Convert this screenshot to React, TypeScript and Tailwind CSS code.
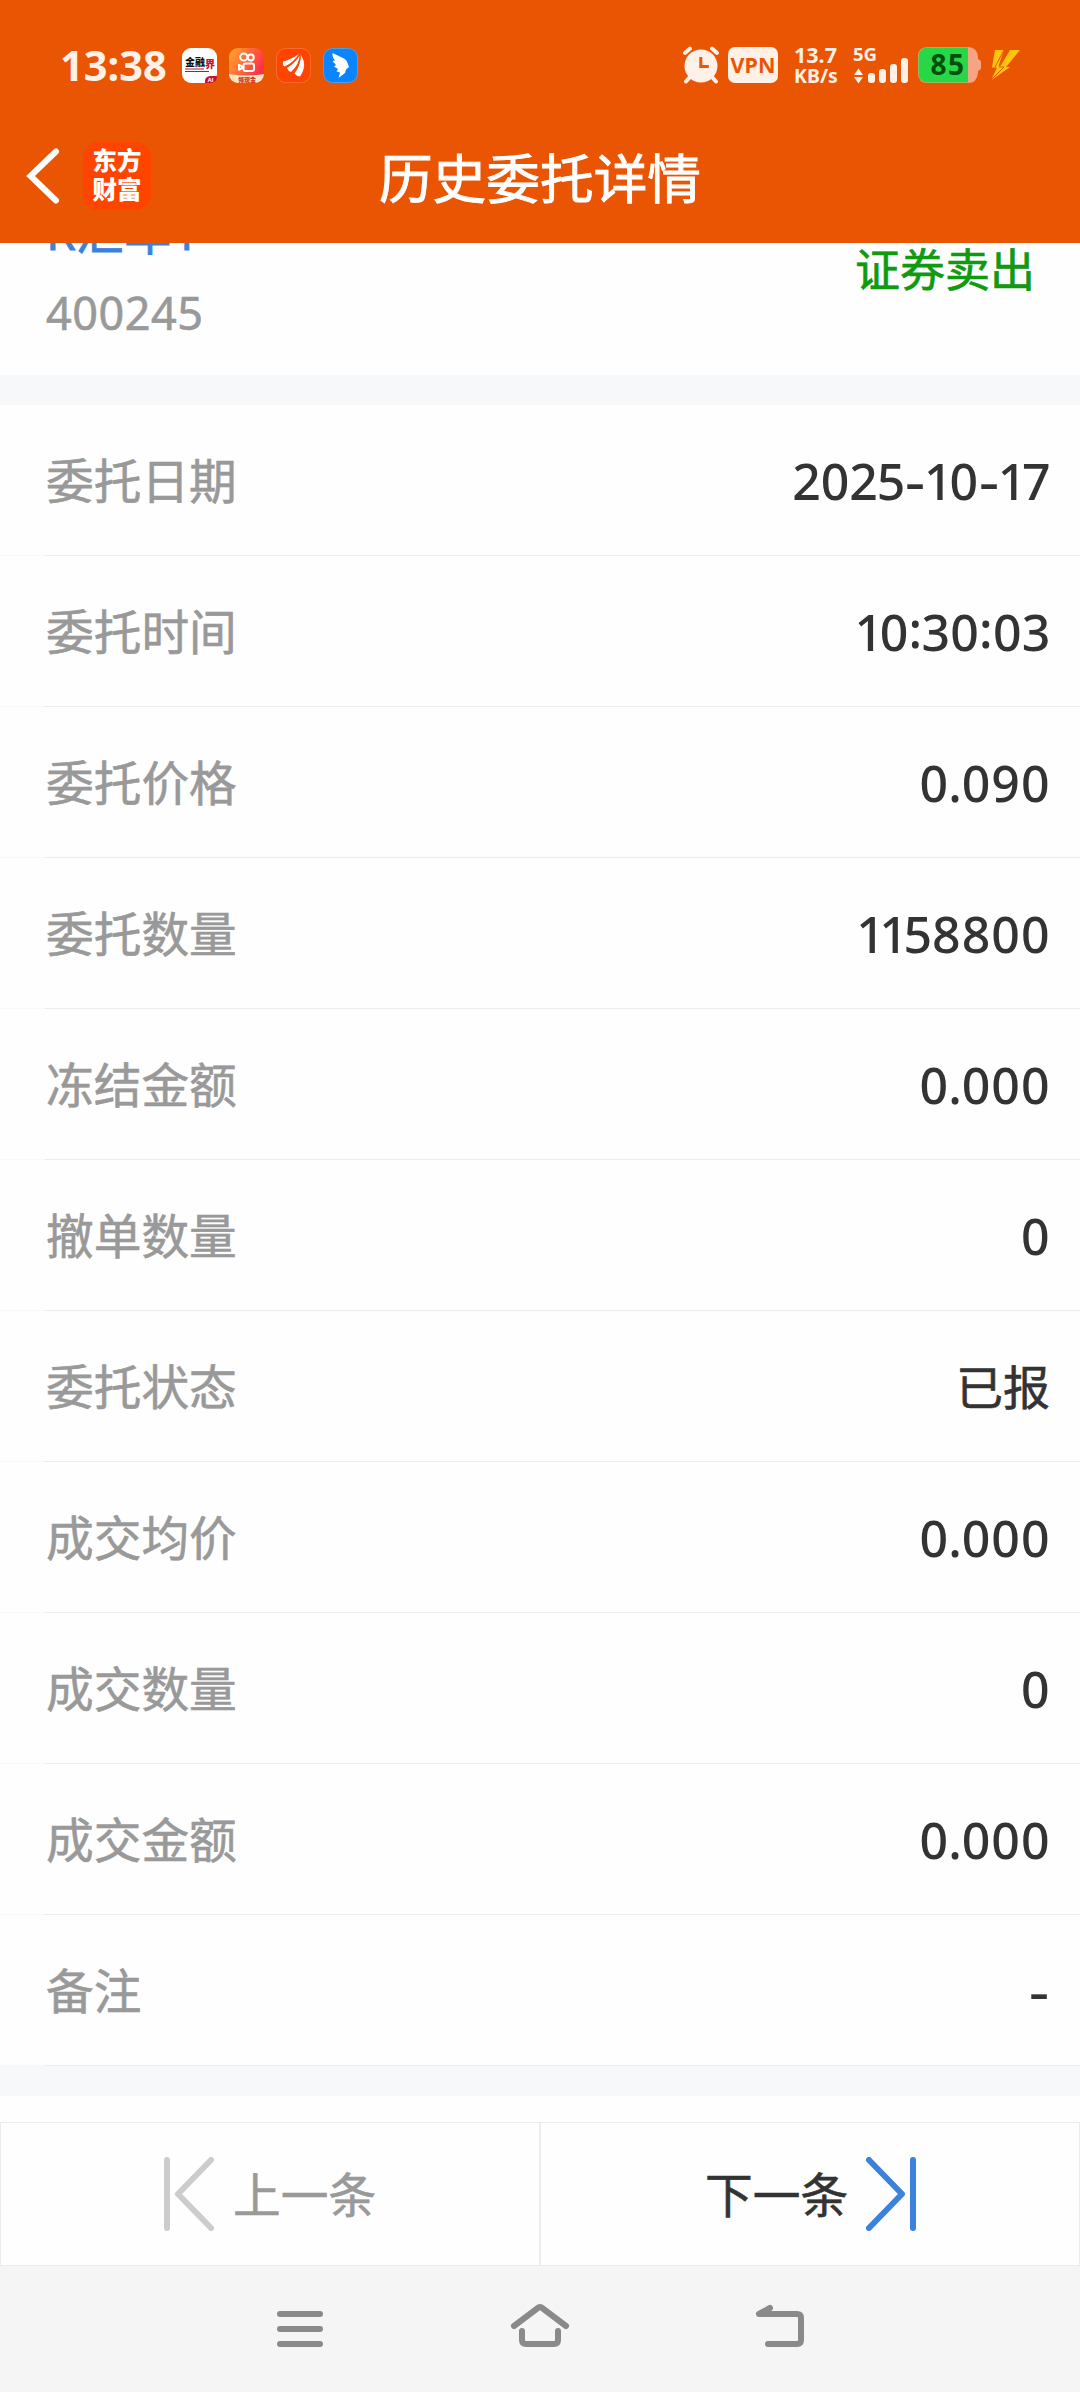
import React from "react";

const rows: [string, string][] = [
  ["委托日期", "2025-10-17"],
  ["委托时间", "10:30:03"],
  ["委托价格", "0.090"],
  ["委托数量", "1158800"],
  ["冻结金额", "0.000"],
  ["撤单数量", "0"],
  ["委托状态", "已报"],
  ["成交均价", "0.000"],
  ["成交数量", "0"],
  ["成交金额", "0.000"],
  ["备注", "-"],
];

const charClass: Record<string, string> = {
  "1": "w-[23px]",
  "2": "w-[27.5px]",
  "3": "w-[28px]",
  "5": "w-[27.5px]",
  "7": "w-[27.5px]",
  ".": "w-[12.5px]",
  ":": "w-[13px]",
  "-": "w-[21px]",
};

function Value({ text }: { text: string }) {
  if (/[^\d.:-]/.test(text)) return <span className="-mt-[3px] block text-[47px] leading-[60px] [-webkit-text-stroke:0.6px]">{text}</span>;
  return (
    <span className="mt-[2px] flex font-['Noto_Sans'] text-[50px] leading-[60px] font-medium">
      {text.split("").map((c, i) => (
        <span key={i} className={`flex justify-center ${charClass[c] ?? "w-[29.6px]"}`}>
          {c === "1" ? <span className="ml-[2px]">1</span> : c === "-" ? <span className="scale-x-125">-</span> : c === ":" ? <span className="-mt-[3px]">:</span> : c}
        </span>
      ))}
    </span>
  );
}

function StatusBar() {
  return (
    <div className="flex h-[130px] items-center pl-[60px] text-[#fff0e8]">
      <span className="w-[122px] font-['Noto_Sans'] text-[41.500px] leading-[58px] font-bold whitespace-nowrap">13:38</span>
      <div className="flex gap-[12px]">
        <svg width="35" height="35" viewBox="0 0 35 35">
          <rect width="35" height="35" rx="9" fill="#fff" />
          <text x="3" y="18" fontSize="10" fontWeight="900" fill="#111" fontFamily="Noto Sans CJK SC">金融</text>
          <text x="23" y="20" fontSize="10" fontWeight="900" fill="#c8102e" fontFamily="Noto Sans CJK SC">界</text>
          <path d="M3 21h19M3 23.500h24" stroke="#c8102e" strokeWidth="1.200" />
          <path d="M23 35q-1-6 5-7h7q0 7-7 7z" fill="#c8102e" />
          <text x="25.500" y="34" fontSize="6" fontWeight="700" fill="#fff" fontFamily="Liberation Sans">AI</text>
        </svg>
        <svg width="35" height="35" viewBox="0 0 35 35">
          <defs>
            <linearGradient id="kw" x1="0" y1="0" x2="1" y2=".5">
              <stop stopColor="#ffa92b" />
              <stop offset="1" stopColor="#ff2f45" />
            </linearGradient>
            <clipPath id="kc"><rect width="35" height="35" rx="9" /></clipPath>
          </defs>
          <g clipPath="url(#kc)">
            <rect width="35" height="35" fill="url(#kw)" />
            <path d="M0 26q18 3 35 0v9H0z" fill="#ffe7c4" />
            <text x="9" y="33.500" fontSize="6" fontWeight="900" fill="#d03020" fontFamily="Noto Sans CJK SC">领现金</text>
          </g>
          <g fill="none" stroke="#fff" strokeWidth="2">
            <circle cx="14.800" cy="9" r="3.600" />
            <circle cx="21.800" cy="9.500" r="2.900" />
            <rect x="14.500" y="15.500" width="10.500" height="7.500" rx="2" />
            <path d="M14.500 19.200l-4.500-2.400v5z" strokeLinejoin="round" />
          </g>
        </svg>
        <svg width="35" height="35" viewBox="0 0 35 35">
          <rect x=".5" y=".5" width="34" height="34" rx="9" fill="#ff4400" stroke="#ff6a30" />
          <path d="M7 13.500Q14 12 23 6Q17 15 8.500 18.500Q6.500 18 7 13.500z" fill="#fff" />
          <path d="M11 20Q19 15 24 6.500Q23 17 15 24Q12 23 11 20z" fill="#fff" />
          <path d="M18.500 25.500Q25 17 24.500 6.500Q32 17 24 28.500Q21 28.500 18.500 25.500z" fill="#fff" />
          <path d="M23.500 6.500Q18 16 9.500 19.200M24.300 6.500Q24.500 17 16.500 25" fill="none" stroke="#ff4400" strokeWidth="1.200" />
        </svg>
        <svg width="35" height="35" viewBox="0 0 35 35">
          <rect x=".5" y=".5" width="34" height="34" rx="9" fill="#0a85ff" stroke="#4aa0e8" />
          <path d="M9.500 5L21 10.500Q24 12 24.500 15L26 19L23 21.500L22 25L15.500 30L17 24.500L13.500 23.500L15 21L11 18.500L13 17L9.500 13L12 12.500Q9 9 9.500 5z" fill="#fff" />
        </svg>
      </div>
      <div className="ml-[324px] flex items-center">
        <svg width="38" height="38" viewBox="0 0 38 38">
          <g stroke="#fff0e8" strokeWidth="4" strokeLinecap="round">
            <path d="M3 7l5-4.500M35 7l-5-4.500M8 31l-4 4.500M30 31l4 4.500" />
          </g>
          <circle cx="19" cy="20" r="16.500" fill="#fff0e8" />
          <path d="M18.800 11v9.500h8" fill="none" stroke="#ea5504" strokeWidth="3" />
        </svg>
        <span className="ml-[8px] flex h-[36px] w-[50px] items-center justify-center rounded-[7px] bg-[#fff0e8] font-['Noto_Sans'] text-[21.500px] leading-[30px] font-bold text-[#ea5504]">VPN</span>
        <span className="ml-[16px] w-[60px] font-['Noto_Sans'] text-[21.500px] leading-[21px] font-bold whitespace-nowrap">
          <span className="block">13.7</span>
          <span className="block text-[19.500px]">KB/s</span>
        </span>
        <svg width="54" height="38" viewBox="0 0 54 38" overflow="visible">
          <text x="-1" y="14.500" fontSize="18.500" fontWeight="700" fill="#fff0e8" fontFamily="Noto Sans">5G</text>
          <path d="M0 29l4.500-6.500L9 29zM0 31h9l-4.500 6.500z" fill="#fff0e8" />
          <rect x="14" y="27" width="7" height="10" rx="3" fill="#fff0e8" />
          <rect x="25" y="23" width="7" height="14" rx="3" fill="#fff0e8" />
          <rect x="36" y="18" width="7" height="19" rx="3" fill="#fff0e8" />
          <rect x="47" y="12" width="7" height="25" rx="3" fill="#fff0e8" />
        </svg>
        <svg className="ml-[10px]" width="64" height="36" viewBox="0 0 64 36" overflow="visible">
          <path d="M10 0H50q9 0 10 10v2q3 1 3 3v6q0 2-3 3v2q-1 10-10 10H10Q0 36 0 26V10Q0 0 10 0z" fill="#f5a583" />
          <path d="M10 .5H50v35H10Q.5 35.500 .5 26V10Q.5 .5 10 .5z" fill="#28d745" />
          <text x="30" y="28" textAnchor="middle" fontSize="28" fontWeight="700" fill="#064d10" fontFamily="Noto Sans" letterSpacing="1.500">85</text>
        </svg>
        <svg className="ml-[8px]" width="31" height="31" viewBox="0 0 31 31">
          <path d="M5 0h9L8.500 16h2L20 0h10L16 17h4L1 30.500L7 17.500H2z" fill="#ffc40c" />
          <path d="M14 0L5 17M1 30L14 17h-5" fill="none" stroke="#ea5504" strokeWidth="1" />
        </svg>
      </div>
    </div>
  );
}

export default function App() {
  return (
    <div className="flex h-[2392px] w-[1080px] flex-col overflow-hidden bg-[#fefefe] font-['Noto_Sans_CJK_SC',sans-serif] text-[#333]">
      <header className="h-[243px] shrink-0 bg-[#ea5504]">
        <StatusBar />
        <div className="grid h-[92px] grid-cols-[1fr_auto_1fr] items-center">
          <div className="flex items-center pl-[26px]">
            <svg width="34" height="56" viewBox="0 0 34 56">
              <path d="M30 3.500L4.500 28L30 52.500" fill="none" stroke="#fff" strokeWidth="6" strokeLinecap="round" strokeLinejoin="miter" />
            </svg>
            <div className="ml-[23px] flex size-[68px] flex-col items-center justify-center rounded-[16px] bg-[#ff4400] pb-[4px] text-[24.500px] leading-[29px] font-black text-white">
              <span>东方</span>
              <span>财富</span>
            </div>
          </div>
          <h1 className="-mt-[1px] text-[53.700px] leading-[70px] font-normal text-white [-webkit-text-stroke:0.9px]">历史委托详情</h1>
        </div>
      </header>

      <section className="flex h-[132px] shrink-0 justify-between overflow-hidden pr-[45px] pl-[46px]">
        <div className="-mt-[41px]">
          <div className="font-['Noto_Sans','Noto_Sans_CJK_SC'] text-[48px] leading-[60px] whitespace-nowrap text-[#3c82dc] [-webkit-text-stroke:0.8px]">R汇车1</div>
          <div className="mt-[21px] font-['Noto_Sans'] text-[45px] leading-[60px] tracking-[0.500px] text-[#999] [-webkit-text-stroke:0.6px]">400245</div>
        </div>
        <div className="-mt-[5px] text-[45px] leading-[60px] text-[#0f9a0f] [-webkit-text-stroke:0.7px]">证券卖出</div>
      </section>

      <div className="h-[30px] shrink-0 bg-[#f7f8fa]" />

      <dl className="shrink-0">
        {rows.map(([label, value]) => (
          <div key={label} className="flex h-[151px] flex-col">
            <div className="flex h-[150px] items-center justify-between pr-[30px] pl-[46px]">
              <dt className="-mt-[2px] text-[47.700px] leading-[60px] text-[#999] [-webkit-text-stroke:0.6px]">{label}</dt>
              <dd><Value text={value} /></dd>
            </div>
            <div className="h-px bg-[#f7f8fa] pl-[45px]"><div className="h-px bg-[#ebebeb]" /></div>
          </div>
        ))}
      </dl>

      <div className="h-[30px] shrink-0 bg-[#f7f8fa]" />

      <div className="mt-[26px] grid h-[144px] shrink-0 grid-cols-2">
        <button className="flex items-center border border-[#ebebeb] pl-[163px] text-[47.700px] leading-[60px] text-[#999] [-webkit-text-stroke:0.6px]">
          <svg width="50" height="74" viewBox="0 0 50 74" fill="none" stroke="#ccc" strokeWidth="6" strokeLinecap="round" strokeLinejoin="round">
            <path d="M3 3v68M47 3L14 37L47 71" />
          </svg>
          <span className="-mt-[2px] ml-[19px]">上一条</span>
        </button>
        <button className="flex items-center border border-[#ebebeb] pl-[164px] text-[47.700px] leading-[60px] [-webkit-text-stroke:0.6px]">
          <span className="-mt-[2px] mr-[18px]">下一条</span>
          <svg width="50" height="74" viewBox="0 0 50 74" fill="none" stroke="#3c82dc" strokeWidth="6" strokeLinecap="round" strokeLinejoin="round">
            <path d="M47 3v68M3 3L36 37L3 71" />
          </svg>
        </button>
      </div>

      <nav className="flex flex-1 justify-center gap-[184px] bg-[#f5f5f5] pt-[37px]">
        <svg width="56" height="52" viewBox="0 0 56 52" fill="none" stroke="#8a8a8a" strokeWidth="6" strokeLinecap="round">
          <path d="M10 11h40M10 26h40M10 41h40" />
        </svg>
        <svg width="60" height="52" viewBox="0 0 60 52" fill="none" stroke="#8a8a8a" strokeWidth="6" strokeLinecap="round" strokeLinejoin="round">
          <path d="M4 23L28.500 4.500q1.500-1 3 0L56 23M12 28v9q0 4 4 4h28q4 0 4-4v-9" />
        </svg>
        <svg width="56" height="52" viewBox="0 0 56 52" fill="none" stroke="#8a8a8a" strokeWidth="6" strokeLinecap="round" strokeLinejoin="round">
          <path d="M16 5L5 11h38q4 0 4 4v22q0 4-4 4H14" />
        </svg>
      </nav>
    </div>
  );
}
